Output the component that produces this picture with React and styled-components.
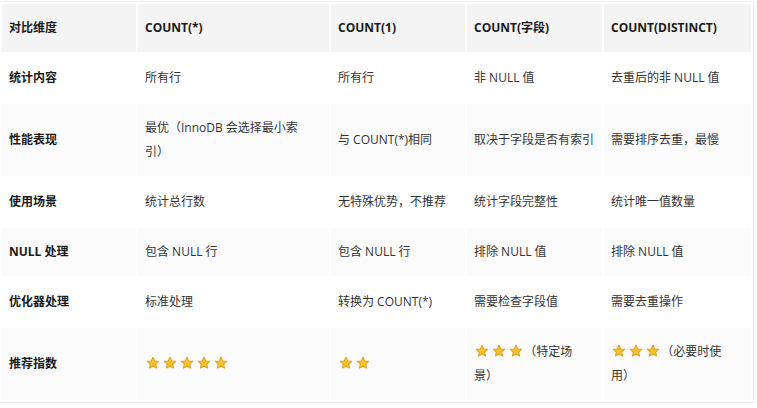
import React from "react";
import styled, { createGlobalStyle } from "styled-components";

const Global = createGlobalStyle`
  html, body { margin: 0; padding: 0; background: #fff; }
  body { font-family: "Open Sans", "Noto Sans CJK SC", sans-serif; }
`;

const Table = styled.table`
  margin: 1px 0 0 -1px;
  width: 755px;
  table-layout: fixed;
  border-collapse: separate;
  border-spacing: 2px;
  border: 1px solid #ececec;
  font-size: 12px;
  line-height: 24px;
  color: #333;
`;

const Row = styled.tr`
  background: ${(p) => (p.$head ? "#f4f4f4" : p.$alt ? "#fbfbfb" : "#ffffff")};
`;

const Cell = styled.td`
  padding: 12px 7px;
  vertical-align: middle;
  text-align: left;
  font-weight: ${(p) => (p.$bold ? 700 : 400)};
  color: ${(p) => (p.$bold ? "#1a1a1a" : "#333")};
`;

const StarSvg = styled.svg`
  display: inline-block;
  width: 14px;
  height: 14px;
  margin: 0 1.4px;
  vertical-align: -2px;
`;

const Star = () => (
  <StarSvg viewBox="0 0 24 24">
    <path
      d="M12 2.2l2.9 6.3 6.8.7-5.1 4.6 1.5 6.8L12 17.1l-6.1 3.5 1.5-6.8-5.1-4.6 6.8-.7z"
      fill="#f4c430"
      stroke="#e3a21a"
      strokeWidth="1.8"
      strokeLinejoin="round"
    />
  </StarSvg>
);

const Stars = ({ n }) => (
  <>
    {Array.from({ length: n }).map((_, i) => (
      <Star key={i} />
    ))}
  </>
);

const header = ["对比维度", "COUNT(*)", "COUNT(1)", "COUNT(字段)", "COUNT(DISTINCT)"];

const rows = [
  ["统计内容", "所有行", "所有行", "非 NULL 值", "去重后的非 NULL 值"],
  [
    "性能表现",
    <>
      最优（InnoDB 会选择最小索
      <br />
      引）
    </>,
    "与 COUNT(*)相同",
    "取决于字段是否有索引",
    "需要排序去重，最慢",
  ],
  ["使用场景", "统计总行数", "无特殊优势，不推荐", "统计字段完整性", "统计唯一值数量"],
  ["NULL 处理", "包含 NULL 行", "包含 NULL 行", "排除 NULL 值", "排除 NULL 值"],
  ["优化器处理", "标准处理", "转换为 COUNT(*)", "需要检查字段值", "需要去重操作"],
  [
    "推荐指数",
    <Stars n={5} />,
    <Stars n={2} />,
    <>
      <Stars n={3} />（特定场
      <br />
      景）
    </>,
    <>
      <Stars n={3} />（必要时使
      <br />
      用）
    </>,
  ],
];

const widths = [134, 191, 134, 135, 147];

export default function App() {
  return (
    <>
      <Global />
      <Table>
        <colgroup>
          {widths.map((w, i) => (
            <col key={i} style={{ width: w }} />
          ))}
        </colgroup>
        <thead>
          <Row $head>
            {header.map((h, i) => (
              <Cell as="th" key={i} $bold>
                {h}
              </Cell>
            ))}
          </Row>
        </thead>
        <tbody>
          {rows.map((r, ri) => (
            <Row key={ri} $alt={ri % 2 === 1}>
              {r.map((c, ci) => (
                <Cell key={ci} $bold={ci === 0}>
                  {c}
                </Cell>
              ))}
            </Row>
          ))}
        </tbody>
      </Table>
    </>
  );
}
